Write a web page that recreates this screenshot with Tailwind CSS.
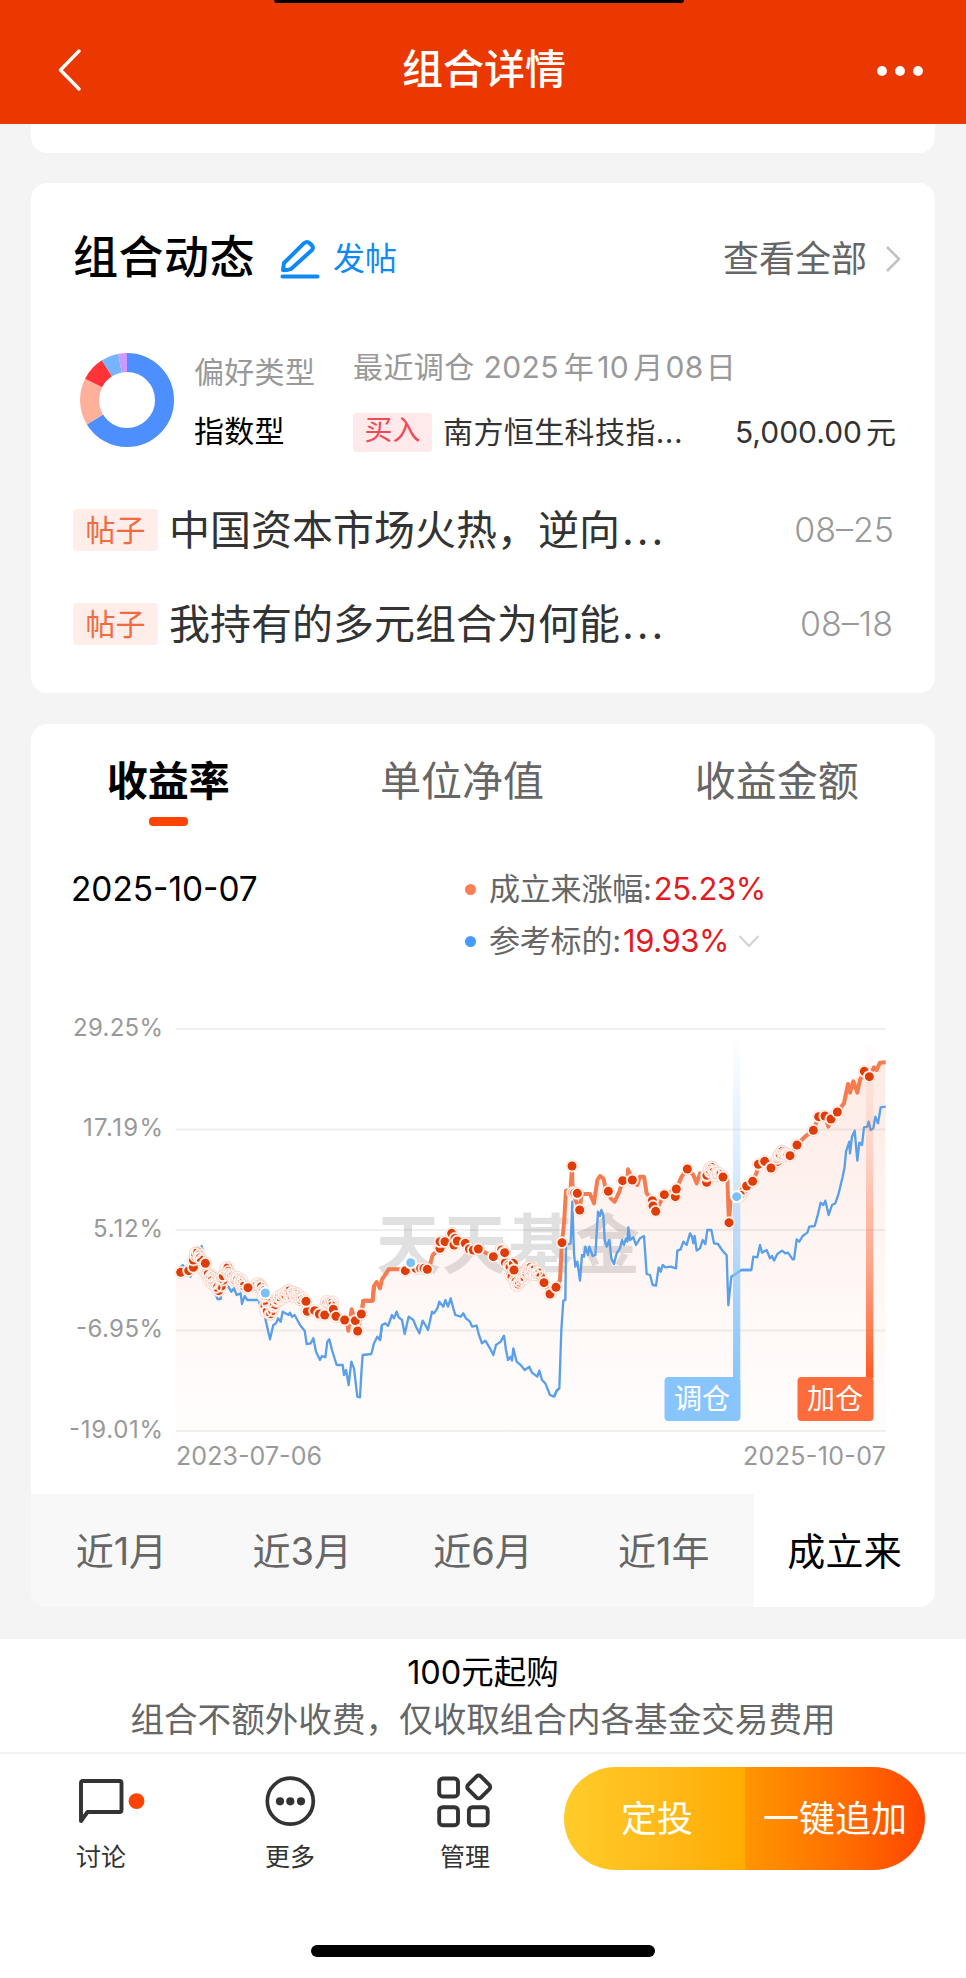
<!DOCTYPE html>
<html lang="zh-CN">
<head>
<meta charset="utf-8">
<title>组合详情</title>
<script src="https://cdn.jsdelivr.net/npm/@tailwindcss/browser@4"></script>
</head>
<body class="bg-[#f4f4f4] font-['Inter','Noto_Sans_CJK_SC',sans-serif] text-black">
<div class="flex h-[1978px] w-[966px] flex-col overflow-hidden">

  <!-- Navigation bar -->
  <header class="relative flex h-[124px] shrink-0 items-center justify-between bg-[#ea3800] pt-[17px] pr-[43px] pl-[56px]">
    <div class="absolute top-0 left-[274px] h-[3px] w-[410px] rounded-b-[12px] bg-black"></div>
    <svg class="h-[44px] w-[52px]" viewBox="0 0 52 44" fill="none" stroke="#fff" stroke-width="3.4" stroke-linecap="round" stroke-linejoin="round"><path d="M23 2 4.500 21 23 40"/></svg>
    <h1 class="-mt-[3px] mr-[11px] text-[41px] leading-[50px] font-medium text-white">组合详情</h1>
    <svg class="h-[12px] w-[52px]" viewBox="0 0 52 12" fill="#fff"><circle cx="11" cy="6" r="4.900"/><circle cx="29" cy="6" r="4.900"/><circle cx="47" cy="6" r="4.900"/></svg>
  </header>

  <main class="flex h-[1515px] shrink-0 flex-col px-[31px]">
    <div class="h-[29px] rounded-b-[16px] bg-white"></div>

    <!-- Activity card -->
    <section class="mt-[30px] flex h-[510px] flex-col rounded-[16px] bg-white pr-[33px] pl-[42px]">
      <div class="mt-[45px] flex h-[60px] items-center">
        <h2 class="text-[45px] leading-[60px] font-medium tracking-[0.5px]">组合动态</h2>
        <svg class="mt-[2px] ml-[25px] h-[40px] w-[40px]" viewBox="0 0 40 40" fill="none" stroke="#0f8af5" stroke-width="4" stroke-linejoin="round" stroke-linecap="round"><path d="M3 31 4 24 24 4.200Q27 1.800 29.500 4L32 6.500Q34 9 31.500 11.500L11 30Q7 31.500 3 31Z"/><path d="M2.500 37.500H37.500"/></svg>
        <span class="mt-[1px] ml-[13px] text-[32px] leading-[60px] text-[#0f8af5]">发帖</span>
        <span class="mt-[2px] ml-auto text-[36px] leading-[60px] text-[#666]">查看全部</span>
        <svg class="mt-[2px] ml-[17px] h-[30px] w-[18px]" viewBox="0 0 18 30" fill="none" stroke="#c2c2c2" stroke-width="2.600"><path d="M3 3 15 15 3 27"/></svg>
      </div>

      <div class="mt-[59px] flex h-[108px]">
        <svg class="mt-[6px] ml-[7px] h-[94px] w-[94px] -rotate-90" viewBox="0 0 94 94" fill="none" stroke-width="19">
          <circle cx="47" cy="47" r="37.500" pathLength="100" stroke="#4d8fff" stroke-dasharray="66.300 100"/>
          <circle cx="47" cy="47" r="37.500" pathLength="100" stroke="#ffb09a" stroke-dasharray="16.200 100" stroke-dashoffset="-66.300"/>
          <circle cx="47" cy="47" r="37.500" pathLength="100" stroke="#ff3338" stroke-dasharray="8.500 100" stroke-dashoffset="-82.500"/>
          <circle cx="47" cy="47" r="37.500" pathLength="100" stroke="#76b4ff" stroke-dasharray="6 100" stroke-dashoffset="-91"/>
          <circle cx="47" cy="47" r="37.500" pathLength="100" stroke="#cc99ff" stroke-dasharray="3 100" stroke-dashoffset="-97"/>
        </svg>
        <div class="ml-[20px] flex w-[159px] flex-col pt-[5px]">
          <span class="text-[30px] leading-[40px] tracking-[0.3px] text-[#999]">偏好类型</span>
          <span class="mt-[19px] text-[30px] leading-[40px] tracking-[0.3px]">指数型</span>
        </div>
        <div class="flex flex-1 flex-col">
          <span class="text-[30px] leading-[40px] tracking-[0.4px] text-[#999]">最近调仓 2025<span class="ml-[5px]">年</span><span class="ml-[3px]">10</span><span class="ml-[4px]">月</span><span class="ml-[2px]">08</span><span class="ml-[2px]">日</span></span>
          <div class="mt-[25px] flex items-center text-[30px] leading-[40px] text-[#333]">
            <span class="flex h-[39px] w-[79px] items-center justify-center rounded-[4px] bg-[#ffe9ea] pb-[4px] text-[28px] leading-[35px] text-[#ef4b57]">买入</span>
            <span class="ml-[11px] tracking-[0.4px]">南方恒生科技指...</span>
            <span class="mr-[6px] ml-auto">5,000.00<span class="ml-[4px]">元</span></span>
          </div>
        </div>
      </div>

      <div class="mt-[45px] flex h-[60px] items-center">
        <span class="flex h-[42px] w-[85px] items-center justify-center rounded-[4px] bg-[#ffede9] text-[30px] leading-[42px] text-[#f26b3f]">帖子</span>
        <span class="ml-[11px] text-[41px] leading-[60px] text-[#333]">中国资本市场火热，逆向<span class="ml-[2px] tracking-[3px]">...</span></span>
        <span class="mr-[8px] ml-auto text-[34px] leading-[60px] font-light text-[#999]">08–25</span>
      </div>
      <div class="mt-[34px] flex h-[60px] items-center">
        <span class="flex h-[42px] w-[85px] items-center justify-center rounded-[4px] bg-[#ffede9] text-[30px] leading-[42px] text-[#f26b3f]">帖子</span>
        <span class="ml-[11px] text-[41px] leading-[60px] text-[#333]">我持有的多元组合为何能<span class="ml-[2px] tracking-[3px]">...</span></span>
        <span class="mr-[9px] ml-auto text-[34px] leading-[60px] font-light text-[#999]">08–18</span>
      </div>
    </section>

    <!-- Performance card -->
    <section class="mt-[31px] flex h-[883px] flex-col overflow-hidden rounded-[16px] bg-white">
      <nav class="flex h-[120px] pt-[27px] text-[41px] leading-[60px] text-[#666]">
        <div class="flex w-[275px] flex-col items-center font-bold text-black">收益率<i class="mt-[6px] h-[9px] w-[39px] rounded-[4px] bg-[#ff4400]"></i></div>
        <div class="flex w-[314px] justify-center">单位净值</div>
        <div class="flex w-[317px] justify-center">收益金额</div>
      </nav>

      <div class="flex h-[156px] pt-[19px] pl-[40px] text-[31px] leading-[52px]">
        <div class="w-[394px] text-[33.400px]">2025-10-07</div>
        <div class="flex flex-col">
          <div class="flex items-center"><i class="size-[11px] rounded-full bg-[#ff7f50]"></i><span class="ml-[13px] tracking-[-0.2px] text-[#666]">成立来涨幅:</span><span class="ml-[2px] tracking-[-0.4px] text-[#e11b1f]">25.23%</span></div>
          <div class="flex items-center"><i class="size-[11px] rounded-full bg-[#459bff]"></i><span class="ml-[13px] tracking-[-0.2px] text-[#666]">参考标的:</span><span class="ml-[2px] tracking-[-0.4px] text-[#e11b1f]">19.93%</span>
            <svg class="ml-[9px] h-[14px] w-[22px]" viewBox="0 0 22 14" fill="none" stroke="#d0d3dc" stroke-width="2.200"><path d="M1.500 2 11 12 20.500 2"/></svg></div>
        </div>
      </div>

      <svg class="h-[494px] w-[904px] shrink-0" viewBox="31 1000 904 494" fill="none">
        <defs>
          <linearGradient id="area" gradientUnits="userSpaceOnUse" x1="0" y1="1060" x2="0" y2="1431"><stop stop-color="#f06a40" stop-opacity=".14"/><stop offset=".5" stop-color="#f06a40" stop-opacity=".065"/><stop offset="1" stop-color="#f06a40" stop-opacity=".015"/></linearGradient>
          <linearGradient id="adjust" x1="0" y1="0" x2="0" y2="1"><stop stop-color="#88c5ff" stop-opacity="0"/><stop offset=".35" stop-color="#88c5ff" stop-opacity=".3"/><stop offset="1" stop-color="#88c5ff"/></linearGradient>
          <linearGradient id="add" x1="0" y1="0" x2="0" y2="1"><stop stop-color="#ff6a3a" stop-opacity="0"/><stop offset=".3" stop-color="#ff6a3a" stop-opacity=".18"/><stop offset=".65" stop-color="#ff6a3a" stop-opacity=".55"/><stop offset="1" stop-color="#ff5a20"/></linearGradient>
          <marker id="buy" markerUnits="userSpaceOnUse" markerWidth="44" markerHeight="44" refX="22" refY="22"><circle cx="22" cy="22" r="18.500" fill="#fffaf8" stroke="#f7d3c7" stroke-width="1.800"/><circle cx="22" cy="22" r="13.500" fill="#e03c05"/></marker>
          <marker id="ring" markerUnits="userSpaceOnUse" markerWidth="44" markerHeight="44" refX="22" refY="22"><circle cx="22" cy="22" r="16" stroke="#fff8f5" stroke-width="5"/><circle cx="22" cy="22" r="18.500" stroke="#f3c4b5" stroke-width="1.800"/></marker>
          <marker id="shift" markerUnits="userSpaceOnUse" markerWidth="44" markerHeight="44" refX="22" refY="22"><circle cx="22" cy="22" r="19.500" fill="#fff"/><circle cx="22" cy="22" r="13.500" fill="#7cc0fa"/></marker>
        </defs>

        <path d="M176 1029H885.500M176 1129.500H885.500M176 1230H885.500M176 1330.500H885.500M176 1431H885.500" stroke="#efefef" stroke-width="2"/>
        <path fill="url(#area)" d="M176 1272 199 1255 218 1288 228 1271 248 1287 262 1290 270 1312 288 1292 306 1302 325 1312 345 1320 358 1331 362 1300 372 1300 382 1280 390 1269 427 1269 440 1245 452 1234 478 1249 504 1252 518 1280 540 1275 556 1292 560 1240 566 1190 572 1166 575 1196 594 1203 600 1176 614 1201 630 1170 643 1178 655 1210 676 1190 687 1169 697 1182 711 1168 723 1177 729 1222 737 1197 765 1162 790 1155 820 1118 837 1112 848 1083 864 1072 880 1062 885.500 1062V1431H176Z"/>

        <text x="376" y="1268" font-size="65" font-weight="700" fill="#000" fill-opacity=".12" textLength="264">天天基金</text>

        <g stroke="#5a9fe9" stroke-width="7" stroke-linejoin="round">
          <g transform="translate(160 1180) scale(.33333)"><path d="M50 275 68 255 92 290 110 230 125 198 135 240 160 320 172 357H182L190 310 205 320 214 335 222 325 230 345 242 340 246 372 254 348 262 360H296L300 375 310 385 318 425 330 478 340 435 348 430 354 415 362 425 368 395 386 405 390 398 396 410 404 405 420 435 434 452 440 492 452 490 460 475 468 515 480 540 486 528 496 532 502 485 508 478 516 510 530 555H548L552 585 558 570 566 615 574 545 582 565 592 650 600 652 604 580 608 525 634 522 642 490 652 470 660 480 666 435"/></g>
          <g transform="translate(360 1180) scale(.33333)"><path d="M60 480 66 435 76 430 84 438 96 405 102 415 110 395 116 412 126 420 134 462 146 410 160 420 168 440 178 460 188 422 196 435 204 450 216 395 222 400 232 385 238 365 250 380 256 360 264 380 272 355 280 385 286 405 302 410 310 400 318 415 330 425 336 440 350 437 356 462 366 490 376 482 390 505 400 525 408 495 422 485 432 467 438 510 444 540 452 530 456 542 460 505 470 545 482 555 494 570 508 560 516 578 532 590 538 572 546 600 556 610 570 645 582 650 590 632 598 625"/></g>
          <g transform="translate(540 1130) scale(.33333)"><path d="M42 800 50 782 58 775 64 600 70 512 76 510 78 345 92 340 97 215 102 370 106 410 112 395 120 452 126 375 132 380 136 350 144 375 148 350 158 378 166 375 174 245 180 258 184 240 190 255 194 330 200 350 208 330 214 385 222 402 230 370 240 355 246 330 252 345 258 325 262 335 265 292 270 330 280 322 288 345 300 325 312 318 320 432 330 435 338 465 348 467 356 412 362 425 368 405 376 412 392 410 408 415 412 362 422 358 430 335 440 345 450 310 456 320 460 340 464 318 470 362 480 355 488 330 496 342 502 300H514L522 340 534 342 546 360 560 376 565 526 574 440 590 430 604 420 634 420"/></g>
          <g transform="translate(720 1010) scale(.33333)"><path d="M64 780H94L100 740 112 742 120 705 126 728 140 720 150 745 156 738 162 752 172 732 186 722 196 730 204 728 218 748H222L230 688 238 695 248 678 262 668 268 650 284 648 292 620 302 578 310 585 316 572 326 615 336 585 346 580 356 550 368 500 374 470 378 425 388 395 390 430 396 380 404 362 412 452 418 398 426 405 432 352 442 350 446 335 452 360 460 355 466 320 474 340 482 292 497 290"/></g>
        </g>

        <g stroke="#f47c50" stroke-width="12" stroke-linejoin="round">
          <g transform="translate(160 1180) scale(.33333)"><path d="M50 278 86 272 113 216 136 250 176 330 204 264 264 323 300 312 325 398 385 335 438 364 442 394 494 405 508 368 528 409 560 420 565 452 575 388 593 453 604 402 610 362 638 362 642 318"/></g>
          <g transform="translate(360 1180) scale(.33333)"><path d="M4 402 10 362H38L42 318 50 306 60 325 66 298 76 284 86 268H202L210 255 218 225 240 205V185L275 160 355 207 400 230 432 217 450 270 475 310 505 262 540 285 552 308 570 342 588 322 600 300 606 188"/></g>
          <g transform="translate(540 1130) scale(.33333)"><path d="M66 338 72 280 78 182 92 180 96 108 98 190 119 240 125 192H150L162 220 172 150 180 138 190 145 196 170 205 184 212 205 224 215 238 185 248 152H262L264 118 277 150 292 165 300 140H312L320 190 337 212 347 244 373 194 409 177 425 140 442 117 460 135 470 160 480 130 500 157 515 112 549 141 562 150 567 278 572 205 590 200"/></g>
          <g transform="translate(720 1010) scale(.33333)"><path d="M50 560 80 528 98 514 110 488 115 463 134 454 153 474 190 430 210 437 231 405 255 380 280 361 296 320 315 318 325 350 333 327 352 306 372 280 384 222 390 248 400 214 412 248 420 210 433 184 448 200 462 172 470 180 480 158 497 157"/></g>
        </g>

        <rect x="733" y="1036" width="7.300" height="342" fill="url(#adjust)"/>
        <rect x="866" y="1040" width="7.300" height="338" fill="url(#add)"/>

        <!-- trade markers: dots, the rings of dense trades, then the topmost dots -->
        <g transform="translate(160 1180) scale(.33333)">
          <path marker-start="url(#buy)" marker-mid="url(#buy)" marker-end="url(#buy)" d="M62 277 86 272 100 262 100 240 106 228 113 216 118 225 120 234 136 250 140 275 145 280 156 286 150 296 156 302 165 314 172 322 176 332 184 318 190 300 186 288 198 272 204 262 206 274 208 286 214 292 220 296 226 300 232 298 240 300 244 310 248 318 290 318 300 312 304 320 308 332 318 352 315 378 322 392 330 402 338 392 344 375 352 360 358 352 366 345 374 345 380 335 388 332 392 345 400 338 408 340 414 350 420 350 424 360 442 394 464 392 478 402 500 370 508 368 516 378"/>
          <path marker-start="url(#ring)" marker-mid="url(#ring)" marker-end="url(#ring)" d="M106 220 116 232 124 240 132 272 142 284 148 300 152 290 158 312 168 322 180 296 190 288 198 264 206 282 214 286 222 300 232 292 238 308 246 302 252 318 290 312 300 318 308 330 310 350 322 368 318 396 332 402 340 380 350 364 356 350 364 358 370 342 378 350 384 332 390 346 398 336 404 350 412 342 420 358 428 354 500 364 512 370 518 366"/>
          <path marker-start="url(#buy)" marker-mid="url(#buy)" marker-end="url(#buy)" d="M136 250 264 323 438 364 494 405 520 388 528 409 554 420 586 422 604 402 593 453"/>
          <path marker-start="url(#shift)" d="M316 339V340"/></g>
        <g transform="translate(360 1180) scale(.33333)">
          <path marker-start="url(#buy)" marker-mid="url(#buy)" marker-end="url(#buy)" d="M136 272 168 265 182 265 192 265 202 268 240 205 240 185 255 185 275 160 285 175 282 195 292 183 316 190 328 207 340 210 355 207 400 230 425 210 432 217 436 248 450 262 460 250 452 285 462 270 468 305 475 312 484 300 490 290 500 280 504 262 512 262 516 275 524 268 530 280 538 278 542 290"/>
          <path marker-start="url(#ring)" marker-mid="url(#ring)" marker-end="url(#ring)" d="M424 206 446 256 456 290 464 300 470 316 478 306 484 290 492 296 498 276 506 262 510 282 518 268 524 284 532 276"/>
          <path marker-start="url(#buy)" marker-mid="url(#buy)" marker-end="url(#buy)" d="M434 218 462 270 552 308 570 342 588 322 606 188"/>
          <path marker-start="url(#shift)" d="M152 248V249"/></g>
        <g transform="translate(540 1130) scale(.33333)">
          <path marker-start="url(#buy)" marker-mid="url(#buy)" marker-end="url(#buy)" d="M96 108 98 188 104 189 112 190 119 240 205 184 248 152 277 150 337 212 339 228 347 244 373 194 406 200 409 177 442 117 500 157 500 138 515 112 510 125 520 122 526 134 530 130 538 133"/>
          <path marker-start="url(#ring)" marker-mid="url(#ring)" marker-end="url(#ring)" d="M500 136 508 118 516 112 512 128 522 124 528 136 536 130"/>
          <path marker-start="url(#buy)" marker-end="url(#buy)" d="M549 141 567 278"/></g>
        <g transform="translate(720 1010) scale(.33333)">
          <path marker-start="url(#buy)" marker-mid="url(#buy)" marker-end="url(#buy)" d="M60 556 66 550 72 540 115 463 134 454 153 474 172 455 175 440 180 432 187 424 193 430 198 436 203 434"/>
          <path marker-start="url(#ring)" marker-mid="url(#ring)" marker-end="url(#ring)" d="M62 556 70 542 172 446 178 436 186 424 190 438 198 432"/>
          <path marker-start="url(#buy)" marker-mid="url(#buy)" marker-end="url(#buy)" d="M80 528 98 514 153 474 210 437 231 405 280 361 296 320 315 318 333 327 352 306 433 184 448 200"/>
          <path marker-start="url(#shift)" d="M50 560V561"/></g>

        <rect x="664.500" y="1377" width="76" height="44" rx="4" fill="#88c5ff"/>
        <rect x="797.500" y="1377" width="76" height="44" rx="4" fill="#ff6c3b"/>
        <g font-size="28" fill="#fff" text-anchor="middle"><text x="702" y="1409">调仓</text><text x="835" y="1409">加仓</text></g>

        <g font-size="24" fill="#999" text-anchor="end">
          <text x="163" y="1036" textLength="90">29.25%</text><text x="163" y="1136" textLength="80">17.19%</text><text x="163" y="1237" textLength="70">5.12%</text><text x="163" y="1337" textLength="87">-6.95%</text><text x="163" y="1438" textLength="94">-19.01%</text>
        </g>
        <g font-size="25" fill="#999"><text x="176" y="1465" textLength="146">2023-07-06</text><text x="743" y="1465" textLength="143">2025-10-07</text></g>
      </svg>

      <div class="grid h-[113px] shrink-0 grid-cols-5 bg-[#f8f8f8] text-center text-[38px] leading-[115px] text-[#666]">
        <span>近1月</span><span>近3月</span><span>近6月</span><span>近1年</span><span class="h-[113px] bg-white tracking-[0.3px] text-black">成立来</span>
      </div>
    </section>
  </main>

  <!-- Purchase notice -->
  <div class="flex h-[113px] shrink-0 flex-col items-center bg-white pt-[11px]">
    <p class="text-[32.500px] leading-[46px]">100元起购</p>
    <p class="text-[33.600px] leading-[47px] text-[#666]">组合不额外收费，仅收取组合内各基金交易费用</p>
  </div>

  <!-- Bottom actions -->
  <footer class="flex h-[226px] shrink-0 flex-col items-center justify-between border-t-2 border-[#f2f2f2] bg-white pt-[13px] pb-[21px]">
    <div class="flex w-full pr-[41px] pl-[72px] text-[25px] leading-[36px] text-[#333]">
      <div class="flex w-[76px] flex-col">
        <svg class="mt-[3px] h-[62px] w-[76px]" viewBox="72 1770 76 62" fill="none"><path d="M81 1821V1783Q81 1781 83 1781H119.500Q121.500 1781 121.500 1783V1810Q121.500 1812 119.500 1812H87.500L81 1821Z" stroke="#333" stroke-width="3.900" stroke-linejoin="round"/><circle cx="136.500" cy="1801.200" r="7.900" fill="#ff4400"/></svg>
        <span class="mt-[7px] ml-[4px]">讨论</span>
      </div>
      <div class="ml-[104px] flex w-[76px] flex-col items-center">
        <svg class="mt-[3px] h-[62px] w-[76px]" viewBox="252 1770 76 62" fill="none"><circle cx="290.300" cy="1801.200" r="23" stroke="#333" stroke-width="3.700"/><g fill="#333"><circle cx="280" cy="1801.300" r="4.100"/><circle cx="290.300" cy="1801.300" r="4.100"/><circle cx="301" cy="1801.300" r="4.100"/></g></svg>
        <span class="mt-[7px]">更多</span>
      </div>
      <div class="ml-[98px] flex w-[76px] flex-col items-center">
        <svg class="mt-[3px] h-[62px] w-[76px]" viewBox="426 1770 76 62" fill="none" stroke="#333" stroke-width="3.900"><rect x="439.200" y="1778.500" width="18.800" height="18" rx="3.500"/><rect x="439.200" y="1807.200" width="18.800" height="18" rx="3.500"/><rect x="468.900" y="1807.200" width="18.800" height="18" rx="3.500"/><rect x="469.700" y="1777.900" width="18" height="18" rx="3" transform="rotate(45 478.700 1786.900)"/></svg>
        <span class="mt-[7px] ml-[2px]">管理</span>
      </div>
      <div class="ml-auto flex h-[103px] w-[361px] overflow-hidden rounded-full text-[36px] leading-[105px] text-white">
        <button class="w-[181px] bg-linear-to-r from-[#ffcc29] to-[#ffab00] pl-[5px]">定投</button>
        <button class="w-[180px] bg-linear-to-r from-[#ff9500] to-[#ff4400] whitespace-nowrap">一键追加</button>
      </div>
    </div>
    <div class="h-[12px] w-[344px] rounded-full bg-black"></div>
  </footer>
</div>
</body>
</html>
